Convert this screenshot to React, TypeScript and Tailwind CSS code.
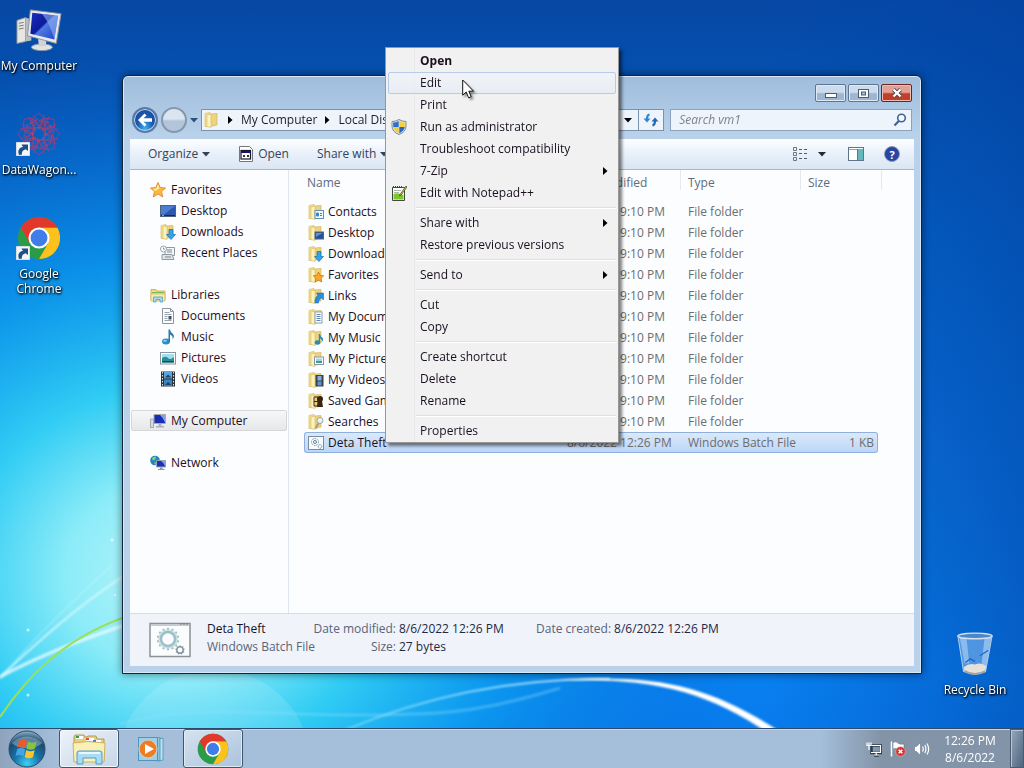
import { FC, ReactNode, useState } from 'react'

interface IconProps {
  className?: string
}

/* ---------- Icons ---------- */

const ComputerIcon: FC<IconProps> = ({ className }) => (
  <svg viewBox="0 0 48 44" className={className} aria-hidden="true">
    <defs>
      <linearGradient id="screen" x1="0" y1="0" x2="1" y2="1">
        <stop offset="0" stopColor="#1a2fc0" />
        <stop offset="0.45" stopColor="#0c1a9a" />
        <stop offset="0.5" stopColor="#4f7be0" />
        <stop offset="1" stopColor="#1c3ed0" />
      </linearGradient>
    </defs>
    <path d="M1 12 L10 9 V34 L1 36 Z" fill="#e6e6e2" stroke="#8d9096" strokeWidth="1" />
    <path d="M10 9 L16 11 V33 L10 34 Z" fill="#b9bcc0" />
    <path d="M3 15 L8 14 M3 18 L8 17 M3 21 L8 20" stroke="#777" strokeWidth="1" />
    <ellipse cx="27" cy="40" rx="11" ry="3.5" fill="#dfe3e6" stroke="#8f979e" strokeWidth="1" />
    <path d="M23 31 H32 L31 39 H24 Z" fill="#cfd3d6" />
    <path d="M15 1 L47 5 L42 36 L12 28 Z" fill="#e7eaec" stroke="#8b9299" strokeWidth="1" />
    <path d="M17 4 L44 7 L40 32 L15 26 Z" fill="url(#screen)" />
    <path d="M27 5 L44 7 L40 32 Q36 16 27 5 Z" fill="#8fb0f2" opacity="0.6" />
  </svg>
)

const ShortcutArrow: FC<IconProps> = ({ className }) => (
  <svg viewBox="0 0 14 14" className={className} aria-hidden="true">
    <rect width="14" height="14" fill="#f4f6f8" stroke="#b8c4d0" strokeWidth="1" />
    <path d="M3 13 C1 8 4 5 7 5 L5.5 2.5 H12 V9 L9.8 7.2 C7 8 5.5 9.500 6 12.500 Z" fill="#1e4f86" />
  </svg>
)

const WagonIcon: FC<IconProps> = ({ className }) => (
  <svg viewBox="0 0 48 48" className={className} aria-hidden="true" fill="none" stroke="#9a3f80" strokeWidth="0.900">
    {[0, 45, 90, 135, 180, 225, 270, 315].map((a) => (
      <g key={a} transform={`rotate(${a} 24 24)`}>
        <path d="M24 16 L17 7 L24 1 L31 7 Z M24 16 L30 3 M24 16 L18 3 M17 7 L14 13 M20 17 L28 17" />
        <path d="M24 9 L36 12 M20 20 L30 12" stroke="#cc4458" strokeDasharray="2 1" />
      </g>
    ))}
    <circle cx="24" cy="24" r="7" stroke="#cc4458" strokeDasharray="3 2" />
    <circle cx="24" cy="24" r="13" strokeDasharray="2 2" />
  </svg>
)

const ChromeIcon: FC<IconProps> = ({ className }) => (
  <svg viewBox="0 0 48 48" className={className} aria-hidden="true">
    <circle cx="24" cy="24" r="23" fill="#2c9b47" />
    <path d="M24 12.500 H43.900 A23 23 0 0 1 24 47 L34 29.800 Z" fill="#fcc21b" />
    <path d="M4.100 12.500 A23 23 0 0 1 43.900 12.500 H24 L14 29.800 Z" fill="#e2382c" />
    <circle cx="24" cy="24" r="11.500" fill="#fff" />
    <circle cx="24" cy="24" r="9.200" fill="#3f7de8" />
  </svg>
)

const RecycleBinIcon: FC<IconProps> = ({ className }) => (
  <svg viewBox="0 0 40 46" className={className} aria-hidden="true">
    <path d="M2 4 L8 42 Q20 48 31 42 L38 4 Z" fill="#7fb4ee" opacity="0.6" />
    <path d="M4 6 L9 33 H14 L11 6 Z" fill="#fff" opacity="0.35" />
    <path d="M30 7 L27 33 L32 36 L37 6 Z" fill="#dcecfb" opacity="0.45" />
    <path d="M8 37 Q14 32 20 34 Q27 31 32 36 L31 42 Q20 47 9 42 Z" fill="#e6e1d8" />
    <path d="M9 41 Q20 47 31 41" fill="none" stroke="#a4a4a0" strokeWidth="2" />
    <path d="M10 32 L15 28 L20 31 M25 25 L34 19" stroke="#1d5fc0" strokeWidth="1.200" fill="none" />
    <ellipse cx="20" cy="4" rx="18" ry="3" fill="#4a86c8" stroke="#d3e0ea" strokeWidth="1.500" />
    <path d="M2 4 L8 42 M38 4 L31 42" stroke="#b9d4ee" strokeWidth="1" />
  </svg>
)

const FolderIcon: FC<{ children?: ReactNode }> = ({ children }) => (
  <svg viewBox="0 0 16 16" className="size-4 shrink-0" aria-hidden="true">
    <path d="M1 1.500 L6 0.500 V14.500 L1 14.500 Z" fill="#f6e08e" stroke="#d5b554" strokeWidth="0.600" />
    <path d="M6 2 L13 1.500 V13 L6 14.500 Z" fill="#efd27c" stroke="#cfae4f" strokeWidth="0.600" />
    <path d="M3 3 L7 2 V15.500 L3 14.500 Z" fill="#fdf2bd" stroke="#d9bb5e" strokeWidth="0.600" />
    {children}
  </svg>
)

const Overlay = {
  contacts: (
    <g>
      <rect x="7" y="6.500" width="8.500" height="8" fill="#f4fafe" stroke="#5f8fb5" />
      <path d="M8.500 9 h2 v3 h-2z M12 9.500 h2 M12 11.500 h2" stroke="#3a87c6" fill="#3a87c6" />
    </g>
  ),
  desktop: (
    <g>
      <rect x="7" y="7" width="8.500" height="7" fill="#2450a0" stroke="#55657a" />
      <path d="M8 8 h6.500 l-6.500 4z" fill="#5d90dd" />
    </g>
  ),
  downloads: <path d="M9 5.500 h4 v5 h2.500 l-4.500 5 l-4.500 -5 h2.500z" fill="#35a3e8" stroke="#176fae" strokeWidth="0.700" />,
  favorites: (
    <path
      d="M10.500 5 l1.600 3.400 l3.600 0.400 l-2.600 2.500 l0.700 3.700 l-3.300 -1.800 l-3.300 1.800 l0.700 -3.700 l-2.600 -2.500 l3.600 -0.400z"
      fill="#f6a92e"
      stroke="#c9690f"
      strokeWidth="0.700"
    />
  ),
  links: <path d="M7 15 C6.500 11 8 8.500 10 7.500 L8.500 5 H15.500 V12 L13.500 10 C11.500 11 10.500 12.500 10.500 15 Z" fill="#2b8ddd" stroke="#1260a5" strokeWidth="0.500" />,
  documents: (
    <g>
      <rect x="7" y="3" width="7" height="11" fill="#fafcff" stroke="#8d9fb2" />
      <path d="M8.500 5.500 h4 M8.500 7.500 h4 M8.500 9.500 h4 M8.500 11.500 h4" stroke="#5f87b8" />
    </g>
  ),
  music: (
    <g fill="#2f89b8">
      <ellipse cx="9.500" cy="12.500" rx="2.800" ry="2.200" />
      <path d="M10.800 12.500 V4 H12 Q12.500 7 15 8 Q15.500 11 13.500 12 Q14.500 9.500 12 8.500 V12.500z" />
    </g>
  ),
  pictures: (
    <g>
      <rect x="6.500" y="6" width="9" height="7.500" fill="#fff" stroke="#8796a4" />
      <rect x="8" y="7.500" width="6" height="2.500" fill="#9ed0ee" />
      <rect x="8" y="10" width="6" height="2" fill="#4c9783" />
    </g>
  ),
  videos: (
    <g>
      <rect x="7.500" y="3" width="8" height="11.500" fill="#3a424c" />
      <rect x="9.500" y="4" width="4" height="4.500" fill="#7db3de" />
      <rect x="9.500" y="9.500" width="4" height="4" fill="#5b94c8" />
    </g>
  ),
  games: (
    <g fill="#3a2410">
      <circle cx="12" cy="6" r="3" />
      <path d="M10 8 h4 l1 6 h-6z" />
      <path d="M6 4 h4 v9 h-4z" fill="none" stroke="#3a2410" />
      <path d="M6 8.500 h4" stroke="#3a2410" />
    </g>
  ),
  searches: (
    <g fill="none">
      <path d="M11 8.500 L7.500 14.500" stroke="#a39b82" strokeWidth="2" />
      <circle cx="12" cy="6.500" r="3" fill="#e6f1f8" stroke="#9aa6ac" />
    </g>
  ),
}

const Gear: FC<{ cx: number; cy: number; r: number; teeth: number; color: string }> = ({ cx, cy, r, teeth, color }) => (
  <g stroke={color} fill="none">
    <circle cx={cx} cy={cy} r={r} strokeWidth={r * 0.45} />
    {Array.from({ length: teeth }, (_, i) => (
      <path
        key={i}
        d={`M${cx} ${cy - r} v${-r * 0.5}`}
        strokeWidth={r * 0.28}
        transform={`rotate(${(360 / teeth) * i} ${cx} ${cy})`}
      />
    ))}
  </g>
)

const BatchIcon: FC<IconProps> = ({ className }) => (
  <svg viewBox="0 0 16 16" className={className} aria-hidden="true">
    <rect x="0.500" y="1.500" width="15" height="13" fill="#f8fbfd" stroke="#7a8da0" />
    <g fill="none" stroke="#5f8296">
      <circle cx="7" cy="7" r="3.500" strokeDasharray="1 0.800" />
      <circle cx="7" cy="7" r="1.500" />
      <circle cx="12" cy="11.500" r="1.800" strokeDasharray="1 0.600" />
    </g>
  </svg>
)

const BatchLargeIcon: FC<IconProps> = ({ className }) => (
  <svg viewBox="0 0 42 36" className={className} aria-hidden="true">
    <rect x="1" y="1.500" width="40" height="33" fill="#fbfcfd" stroke="#8c9196" strokeWidth="1.500" />
    <path d="M2 3 H40" stroke="#c5cbd0" strokeWidth="2" />
    <path d="M31 2 h2 M34 2 h2 M37 2 h2" stroke="#6c757d" />
    <Gear cx={19} cy={17} r={7.5} teeth={14} color="#9fbdcc" />
    <circle cx="19" cy="17" r="9" fill="none" stroke="#c6e4d6" strokeWidth="1.500" />
    <Gear cx={31} cy={28} r={3.2} teeth={9} color="#82929e" />
  </svg>
)

const StarIcon = () => (
  <svg viewBox="0 0 16 16" className="size-4 shrink-0" aria-hidden="true">
    <path
      d="M8 0.500 L10.200 5.500 L15.600 6 L11.500 9.600 L12.800 15 L8 12.100 L3.200 15 L4.500 9.600 L0.400 6 L5.800 5.500 Z"
      fill="#fcb83c"
      stroke="#d9822a"
      strokeWidth="0.800"
    />
    <path d="M8 2.500 L9.500 6.300 L5 9 L3 7 L6.300 6.400 Z" fill="#fff0a8" />
  </svg>
)

const DesktopIcon = () => (
  <svg viewBox="0 0 16 16" className="size-4 shrink-0" aria-hidden="true">
    <rect x="0.500" y="2.500" width="15" height="11" fill="#2a57b0" stroke="#50617a" />
    <path d="M1 3 h14 L4 11.500 H1z" fill="#4a7fd0" />
    <path d="M1 12.500 h14" stroke="#1b2c50" />
    <path d="M2 12.500 h2" stroke="#64c96c" />
  </svg>
)

const RecentIcon = () => (
  <svg viewBox="0 0 16 16" className="size-4 shrink-0" aria-hidden="true">
    <path d="M5 2.500 h9.500 v8 h-9.500z" fill="#f4f6f8" stroke="#8f99a3" />
    <path d="M2 9.500 h10 l2 5 h-12z" fill="#e1e5e9" stroke="#8f99a3" />
    <path d="M7 5 h5 M7 7 h5 M5 12 h6" stroke="#7a8792" />
    <circle cx="3.500" cy="4" r="3" fill="#fff" stroke="#98a2ab" />
    <path d="M3.500 2.500 V4.200 H5" stroke="#667" fill="none" strokeWidth="0.700" />
  </svg>
)

const LibrariesIcon = () => (
  <svg viewBox="0 0 16 16" className="size-4 shrink-0" aria-hidden="true">
    <path d="M1 2.500 h5 l1 1.500 h8 v9 h-14z" fill="#f4da7d" stroke="#c9a545" strokeWidth="0.800" />
    <path d="M2 5.500 h12" stroke="#79b956" />
    <path d="M1 7 h14 v7 h-14z" fill="#fbecaa" stroke="#d2b35a" strokeWidth="0.700" />
    <path d="M3.500 15 v-5 h9 v5 h-2.500 v-2.500 h-4 v2.500z" fill="#a6dcf4" stroke="#4aa0cc" strokeWidth="0.800" />
  </svg>
)

const DocumentIcon = () => (
  <svg viewBox="0 0 16 16" className="size-4 shrink-0" aria-hidden="true">
    <path d="M2.500 0.500 h8 l3 3 v12 h-11z" fill="#fbfcfd" stroke="#8e959c" />
    <path d="M10.500 0.500 v3 h3" fill="none" stroke="#8e959c" />
    <path d="M4.500 4.500 h5 M4.500 6.500 h7 M4.500 8.500 h3 M4.500 10.500 h3 M4.500 12.500 h7" stroke="#97a3ae" />
    <rect x="8.500" y="8" width="3" height="3.500" fill="#42525f" />
  </svg>
)

const MusicIcon = () => (
  <svg viewBox="0 0 16 16" className="size-4 shrink-0" aria-hidden="true">
    <ellipse cx="6" cy="12.500" rx="4" ry="3" fill="#2a8cc8" />
    <path d="M8.500 12.500 V0.500 H10 Q10.300 3 13 5 Q15 7.500 12.500 10.500 Q13.500 7 10 5.500 V12.500 Z" fill="#2a7cae" />
    <ellipse cx="5" cy="11.700" rx="1.800" ry="1" fill="#8fd3f3" />
  </svg>
)

const PictureIcon = () => (
  <svg viewBox="0 0 16 16" className="size-4 shrink-0" aria-hidden="true">
    <rect x="0.500" y="2.500" width="15" height="11.500" fill="#fff" stroke="#8b959d" />
    <rect x="2" y="4" width="12" height="5" fill="#a3dcf5" />
    <path d="M2 8 Q6 5.500 8 8 T14 7 V12.500 H2z" fill="#2b8f8c" />
    <path d="M2 11 h12 v1.500 h-12z" fill="#174e6b" />
  </svg>
)

const VideoIcon = () => (
  <svg viewBox="0 0 16 16" className="size-4 shrink-0" aria-hidden="true">
    <rect x="1" y="0.500" width="14" height="15" fill="#2b3138" />
    <rect x="4" y="1" width="8" height="6.500" fill="#5da3dc" />
    <rect x="4" y="8.500" width="8" height="6.500" fill="#3d85c2" />
    <path d="M5 6.500 l3 -3 l3.500 3z M5 14 l3 -3 l3.500 3z" fill="#1b446b" />
    <path d="M2.500 1 v14 M13.500 1 v14" stroke="#e4e8eb" strokeDasharray="1.500 1.500" />
  </svg>
)

const SmallComputerIcon = () => (
  <svg viewBox="0 0 16 16" className="size-4 shrink-0" aria-hidden="true">
    <path d="M0.500 6 h3 v8.500 h-3z" fill="#d9dbdd" stroke="#888f96" strokeWidth="0.700" />
    <path d="M4 1.500 h11.500 v9 h-11.500z" fill="#1b2cb4" stroke="#a3abb4" />
    <path d="M10 2 h5 v7.500 q-2 -5 -5 -7.500z" fill="#7fa1ea" />
    <path d="M8.500 11 h3 v2 h2.500 v1.500 h-8 v-1.500 h2.500z" fill="#aab2ba" />
  </svg>
)

const NetworkIcon = () => (
  <svg viewBox="0 0 16 16" className="size-4 shrink-0" aria-hidden="true">
    <circle cx="5" cy="5.500" r="4.800" fill="#1e84c4" />
    <path d="M2 3 q2 -2 4 -1.500 q0 3 -2 4 q-2 0 -2 -2.500z M4 7.500 l3 0 l-1.500 2.500z" fill="#7bd66c" />
    <path d="M6.500 5.500 h9 v6.500 h-9z" fill="#1c2fb8" stroke="#9aa5b0" />
    <path d="M11 6 h4 v5 q-1 -3 -4 -5z" fill="#7fa1ea" />
    <path d="M10 12.500 h2.500 v1.500 h2 v1 h-6.500 v-1 h2z" fill="#8f98a1" />
  </svg>
)

const CalendarIcon = () => (
  <svg viewBox="0 0 16 16" className="size-4" aria-hidden="true">
    <path d="M1.500 0.500 h10 l3 3 v12 h-13z" fill="#fff" stroke="#777" />
    <rect x="3" y="4.500" width="9.500" height="8.500" fill="#fff" stroke="#14142e" strokeWidth="1.200" />
    <path d="M3 6 h9.500" stroke="#14146e" strokeWidth="2" />
    <path d="M5 9 h2 v2 h-2z M9 9 h2 v2 h-2z" fill="#333" />
  </svg>
)

const ShieldIcon = () => (
  <svg viewBox="0 0 16 16" className="size-4" aria-hidden="true">
    <path d="M8 0.500 Q11 2.500 15 2.500 V7 Q15 13 8 15.500 Q1 13 1 7 V2.500 Q5 2.500 8 0.500Z" fill="#dfe5ea" stroke="#7d8b98" />
    <path d="M7.700 2 V8 H2.200 V3.500 Q5.500 3.500 7.700 2Z" fill="#2f6fd0" />
    <path d="M8.300 2 Q10.500 3.500 13.800 3.500 V8 H8.300Z" fill="#f6d13c" />
    <path d="M2.300 8 H7.700 V14.200 Q2.800 12 2.300 8Z" fill="#f2cd38" />
    <path d="M8.300 8 H13.700 Q13.200 12 8.300 14.200Z" fill="#2b66c5" />
  </svg>
)

const NotepadIcon = () => (
  <svg viewBox="0 0 16 16" className="size-4" aria-hidden="true">
    <path d="M1.500 2.500 h12 v13 h-12z" fill="#fbfdf8" stroke="#3e4a3e" />
    <path d="M2.500 1 v2 M4.500 1 v2 M6.500 1 v2 M8.500 1 v2 M10.500 1 v2" stroke="#444" />
    <path d="M3 5.500 h7 M3 7.500 h5" stroke="#a9b7a9" />
    <path d="M2.500 9 Q7 7 12.500 10 V14.500 H2.500z" fill="#7cc52c" />
    <path d="M15 1 L9 9.500 L8.500 11 L10 10.200 L16 2z" fill="#d9d45a" stroke="#3b3f18" strokeWidth="0.700" />
  </svg>
)

const ExplorerIcon: FC<IconProps> = ({ className }) => (
  <svg viewBox="0 0 36 32" className={className} aria-hidden="true">
    <path d="M3 4 L4 2 H13 L14 4 H16 L17 3 H25 L26 6 H33 V28 H3Z" fill="#e9cf7c" stroke="#b89a4b" />
    <path d="M5 3 h7 v3 h-7z M15 5 h8 v3 h-8z M22 7 h8 v3 h-8z" fill="#fff" />
    <path d="M5 3 h3 v2 h-3z" fill="#3c9b46" />
    <path d="M15 5 h3 v2 h-3z" fill="#d8523e" />
    <path d="M22 7 h3 v2 h-3z" fill="#3d7ac8" />
    <path d="M2 10 L17 8.500 L34 10 L33 29 H3Z" fill="#fbf0b4" stroke="#cdb262" />
    <path d="M6 31 V20 Q6 18 8 18 H29 Q31 18 31 20 V31 H25 V25 H12 V31Z" fill="#a8dcf6" stroke="#4f9fca" />
    <path d="M8 20 H29" stroke="#e9f8ff" strokeWidth="2" />
  </svg>
)

const MediaPlayerIcon: FC<IconProps> = ({ className }) => (
  <svg viewBox="0 0 28 26" className={className} aria-hidden="true">
    <path d="M22 3 L26 2 V24 L22 25Z M19 2 L23 1.500 V24.500 L19 25Z" fill="#bfe2f2" stroke="#4a92b5" strokeWidth="0.800" />
    <rect x="1.500" y="1.500" width="19" height="23" fill="#9ecfe8" stroke="#5295b8" />
    <circle cx="11" cy="13" r="9" fill="#ee7d22" stroke="#c8cfd5" strokeWidth="1.200" />
    <path d="M8 8 L17 13 L8 18Z" fill="#fff" />
  </svg>
)

const StartOrb: FC<IconProps> = ({ className }) => (
  <svg viewBox="0 0 38 38" className={className} aria-hidden="true">
    <defs>
      <radialGradient id="orb" cx="0.5" cy="0.9" r="0.9">
        <stop offset="0" stopColor="#3fd0f5" />
        <stop offset="0.4" stopColor="#1773a8" />
        <stop offset="0.75" stopColor="#1b4a70" />
        <stop offset="1" stopColor="#8fb3cc" />
      </radialGradient>
    </defs>
    <circle cx="19" cy="19" r="18" fill="url(#orb)" stroke="#2c4d6b" strokeWidth="1" />
    <path d="M4 13 Q19 0 34 13 Q30 18 19 18 Q8 18 4 13Z" fill="#fff" opacity="0.3" />
    <path d="M11 11 Q15 8 19 11 L17.500 18 Q13.500 15.500 9.500 17.500Z" fill="#ee5a24" />
    <path d="M20 11.500 Q24.500 14 28.500 11.500 L27 18.500 Q23 21 18.500 18.500Z" fill="#85c441" />
    <path d="M9.200 19 Q13.500 17 17.200 19.500 L15.500 26.500 Q11.500 24 7.500 26Z" fill="#46a3e6" />
    <path d="M18.200 20 Q22.500 22.500 26.700 20 L25 27 Q21 29.500 16.700 27Z" fill="#fcc52b" />
  </svg>
)

const CaretDown: FC<IconProps> = ({ className }) => (
  <svg viewBox="0 0 8 5" className={`h-[5px] w-2 shrink-0 ${className ?? ''}`} aria-hidden="true">
    <path d="M0 0 H8 L4 4.500Z" fill="currentColor" />
  </svg>
)

const CaretRight: FC<IconProps> = ({ className }) => (
  <svg viewBox="0 0 5 8" className={`h-2 w-[5px] shrink-0 ${className ?? ''}`} aria-hidden="true">
    <path d="M0 0 V8 L4.500 4Z" fill="currentColor" />
  </svg>
)

/* ---------- Data ---------- */

interface FileEntry {
  name: string
  icon: ReactNode
  modified: string
  type: string
  size?: string
}

const folder = (name: string, overlay: ReactNode): FileEntry => ({
  name,
  icon: <FolderIcon>{overlay}</FolderIcon>,
  modified: '8/5/2022 9:10 PM',
  type: 'File folder',
})

const FILES: FileEntry[] = [
  folder('Contacts', Overlay.contacts),
  folder('Desktop', Overlay.desktop),
  folder('Downloads', Overlay.downloads),
  folder('Favorites', Overlay.favorites),
  folder('Links', Overlay.links),
  folder('My Documents', Overlay.documents),
  folder('My Music', Overlay.music),
  folder('My Pictures', Overlay.pictures),
  folder('My Videos', Overlay.videos),
  folder('Saved Games', Overlay.games),
  folder('Searches', Overlay.searches),
  {
    name: 'Deta Theft',
    icon: <BatchIcon className="size-4 shrink-0" />,
    modified: '8/6/2022 12:26 PM',
    type: 'Windows Batch File',
    size: '1 KB',
  },
]

interface NavGroup {
  label: string
  icon: ReactNode
  items?: { label: string; icon: ReactNode }[]
}

const NAV: NavGroup[] = [
  {
    label: 'Favorites',
    icon: <StarIcon />,
    items: [
      { label: 'Desktop', icon: <DesktopIcon /> },
      { label: 'Downloads', icon: <FolderIcon>{Overlay.downloads}</FolderIcon> },
      { label: 'Recent Places', icon: <RecentIcon /> },
    ],
  },
  {
    label: 'Libraries',
    icon: <LibrariesIcon />,
    items: [
      { label: 'Documents', icon: <DocumentIcon /> },
      { label: 'Music', icon: <MusicIcon /> },
      { label: 'Pictures', icon: <PictureIcon /> },
      { label: 'Videos', icon: <VideoIcon /> },
    ],
  },
  { label: 'My Computer', icon: <SmallComputerIcon /> },
  { label: 'Network', icon: <NetworkIcon /> },
]

interface MenuEntry {
  label: string
  icon?: ReactNode
  bold?: boolean
  submenu?: boolean
}

const MENU: MenuEntry[][] = [
  [
    { label: 'Open', bold: true },
    { label: 'Edit' },
    { label: 'Print' },
    { label: 'Run as administrator', icon: <ShieldIcon /> },
    { label: 'Troubleshoot compatibility' },
    { label: '7-Zip', submenu: true },
    { label: 'Edit with Notepad++', icon: <NotepadIcon /> },
  ],
  [{ label: 'Share with', submenu: true }, { label: 'Restore previous versions' }],
  [{ label: 'Send to', submenu: true }],
  [{ label: 'Cut' }, { label: 'Copy' }],
  [{ label: 'Create shortcut' }, { label: 'Delete' }, { label: 'Rename' }],
  [{ label: 'Properties' }],
]

/* ---------- Desktop ---------- */

const Wallpaper = () => (
  <svg
    viewBox="0 0 1024 768"
    preserveAspectRatio="none"
    className="absolute inset-0 size-full"
    aria-hidden="true"
  >
    <defs>
      <linearGradient id="sky" x1="0" y1="0" x2="0" y2="1">
        <stop offset="0" stopColor="#0648a4" />
        <stop offset="0.3" stopColor="#0560c4" />
        <stop offset="0.6" stopColor="#0a72dc" />
        <stop offset="0.88" stopColor="#0880f0" />
        <stop offset="1" stopColor="#0878ea" />
      </linearGradient>
      <radialGradient id="glow" gradientUnits="userSpaceOnUse" cx="170" cy="575" r="580" gradientTransform="translate(170 575) scale(1 0.9) translate(-170 -575)">
        <stop offset="0" stopColor="#b8f4fa" />
        <stop offset="0.18" stopColor="#8cecf8" />
        <stop offset="0.36" stopColor="#30ccf4" />
        <stop offset="0.6" stopColor="#0c9cf0" stopOpacity="0.8" />
        <stop offset="1" stopColor="#0668d4" stopOpacity="0" />
      </radialGradient>
      <linearGradient id="shade" x1="0" y1="0" x2="1" y2="0">
        <stop offset="0.75" stopColor="#0047b0" stopOpacity="0" />
        <stop offset="1" stopColor="#0040a0" stopOpacity="0.5" />
      </linearGradient>
      <linearGradient id="arc" gradientUnits="userSpaceOnUse" x1="340" y1="0" x2="780" y2="0">
        <stop offset="0" stopColor="#aef0ff" stopOpacity="0.4" />
        <stop offset="0.6" stopColor="#d8f6ff" stopOpacity="0.9" />
        <stop offset="1" stopColor="#fff" />
      </linearGradient>
      <filter id="soft">
        <feGaussianBlur stdDeviation="1" />
      </filter>
    </defs>
    <rect width="1024" height="768" fill="url(#sky)" />
    <rect width="1024" height="768" fill="url(#glow)" />
    <rect width="1024" height="768" fill="url(#shade)" />
    <circle cx="214" cy="766" r="97" fill="#fff" opacity="0.12" />
    <g fill="none" filter="url(#soft)">
      <path d="M0 677 C40 640 70 612 125 575" stroke="#e0fbff" strokeWidth="2" opacity="0.8" />
      <path d="M0 680 C30 640 75 600 112 565" stroke="#e0fbff" strokeWidth="1" opacity="0.6" />
      <path d="M0 677 C40 655 80 640 125 625" stroke="#f0fdff" strokeWidth="3" opacity="0.8" />
      <path d="M120 724 C200 700 300 720 410 714 C470 714 520 700 560 688" stroke="#8fe0ff" strokeWidth="3" opacity="0.35" />
      <path d="M345 730 C440 690 530 678 610 679" stroke="url(#arc)" strokeWidth="2" />
    </g>
    <path d="M0 717 C25 680 60 640 125 617" fill="none" stroke="#9be05c" strokeWidth="2" />
    <path d="M560 680 C660 674 710 686 782 733 L768 733 C710 694 660 678 560 680Z" fill="#fff" filter="url(#soft)" />
    <g fill="#fff" opacity="0.7">
      <circle cx="112" cy="540" r="1.500" />
      <circle cx="28" cy="630" r="1.500" />
      <circle cx="115" cy="595" r="1" />
      <circle cx="28" cy="695" r="1.500" />
    </g>
  </svg>
)

interface DesktopItemProps {
  label: string
  shortcut?: boolean
  children: ReactNode
}

const DesktopItem: FC<DesktopItemProps> = ({ label, shortcut, children }) => (
  <button className="flex w-[78px] flex-col items-center gap-1.5">
    <span className="relative flex h-11 w-[46px] items-center justify-center">
      {children}
      {shortcut && <ShortcutArrow className="absolute bottom-0 left-0 size-3.5" />}
    </span>
    <span className="text-center leading-[15px] text-white [text-shadow:1px_1px_2px_#000,0_1px_3px_#000]">{label}</span>
  </button>
)

/* ---------- Explorer window ---------- */

const WindowControls = () => (
  <div className="flex justify-end gap-0.5">
    <button
      aria-label="Minimize"
      className="flex h-[18px] w-[31px] items-center justify-center rounded-[2px] border border-[#5e7590] bg-linear-to-b from-[#cddcec] from-45% to-[#9db7d3] to-55% shadow-[inset_0_0_0_1px_#dfeaf5]"
    >
      <svg viewBox="0 0 12 5" className="mt-1 h-[5px] w-3" aria-hidden="true">
        <rect x="0.500" y="0.500" width="11" height="4" fill="#fff" stroke="#4c5c70" />
      </svg>
    </button>
    <button
      aria-label="Maximize"
      className="flex h-[18px] w-[31px] items-center justify-center rounded-[2px] border border-[#5e7590] bg-linear-to-b from-[#cddcec] from-45% to-[#9db7d3] to-55% shadow-[inset_0_0_0_1px_#dfeaf5]"
    >
      <svg viewBox="0 0 11 9" className="h-[9px] w-[11px]" aria-hidden="true">
        <rect x="0.500" y="0.500" width="10" height="8" fill="#fff" stroke="#4c5c70" />
        <rect x="3.500" y="3" width="4" height="3" fill="#a9bfd6" stroke="#4c5c70" />
      </svg>
    </button>
    <button
      aria-label="Close"
      className="flex h-[18px] w-[31px] items-center justify-center rounded-[2px] border border-[#6b2424] bg-linear-to-b from-[#e0a296] from-45% to-[#c2402a] to-55% shadow-[inset_0_0_0_1px_#edbcb2]"
    >
      <svg viewBox="0 0 12 10" className="h-2.5 w-3" aria-hidden="true">
        <path d="M2.500 1.500 L9.500 8.500 M9.500 1.500 L2.500 8.500" stroke="#50404a" strokeWidth="4" />
        <path d="M2.500 1.500 L9.500 8.500 M9.500 1.500 L2.500 8.500" stroke="#fff" strokeWidth="2.400" />
      </svg>
    </button>
  </div>
)

const AddressRow = () => {
  const [query, setQuery] = useState('')

  return (
    <div className="flex items-center">
      <button
        aria-label="Back"
        className="flex size-[26px] items-center justify-center rounded-full border-2 border-[#5a7ba3] bg-radial-[at_50%_90%] from-[#38b4ee] via-[#1c58b4] to-[#1c3c80] shadow-[inset_0_0_0_1px_#b7d2ee]"
      >
        <svg viewBox="0 0 16 14" className="h-3.5 w-4" aria-hidden="true">
          <path d="M7.500 0.500 L1 7 L7.500 13.500 L9.500 11.500 L6.500 8.700 H15 V5.300 H6.500 L9.500 2.500Z" fill="#fff" />
        </svg>
      </button>
      <button
        aria-label="Forward"
        className="ml-[3px] size-[26px] rounded-full border-2 border-[#8497ae] bg-linear-to-b from-[#dbe5f0] from-45% to-[#b3c5da] to-55%"
      />
      <button aria-label="Recent pages" className="flex w-3.5 justify-center text-[#2e4f78]">
        <CaretDown />
      </button>
      <div className="flex h-[22px] min-w-0 flex-1 items-center border border-[#7b92ad] bg-[#eef4fb] text-[#1e1e2a]">
        <span className="flex w-[18px] justify-center pl-0.5">
          <FolderIcon />
        </span>
        <CaretRight className="mx-2 text-black" />
        <button className="whitespace-nowrap">My Computer</button>
        <CaretRight className="mx-2 text-black" />
        <button className="whitespace-nowrap">Local Disk</button>
        <span className="flex-1" />
        <button aria-label="Previous locations" className="flex h-full w-5 items-center justify-center text-black">
          <CaretDown />
        </button>
        <button aria-label="Refresh" className="flex h-full w-[25px] items-center justify-center border-l border-[#7b92ad]">
          <svg viewBox="0 0 16 14" className="h-3.5 w-4" aria-hidden="true">
            <path d="M6.500 1.500 Q4 2 4 6" fill="none" stroke="#2f86cf" strokeWidth="2.200" />
            <path d="M0.500 5.500 H7.500 L4 9.500Z" fill="#2f86cf" />
            <path d="M9.500 12.500 Q12 12 12 8" fill="none" stroke="#1f6bb4" strokeWidth="2.200" />
            <path d="M8.500 8.500 H15.500 L12 4.500Z" fill="#1f6bb4" />
          </svg>
        </button>
      </div>
      <label className="ml-1.5 flex h-[22px] w-[31%] shrink-0 items-center border border-[#8da3bd] bg-[#eef4fb] pr-1 pl-2">
        <input
          aria-label="Search vm1"
          placeholder="Search vm1"
          value={query}
          onChange={(e) => setQuery(e.target.value)}
          className="w-full min-w-0 bg-transparent italic outline-none placeholder:text-[#7d838c]"
        />
        <svg viewBox="0 0 14 14" className="size-3.5 shrink-0" aria-hidden="true">
          <circle cx="8.500" cy="5" r="3.800" fill="#f4f9fe" stroke="#3e6496" strokeWidth="1.600" />
          <path d="M5.800 8 L1.500 12.500" stroke="#3e6496" strokeWidth="2.200" />
        </svg>
      </label>
    </div>
  )
}

const Toolbar = () => (
  <div className="flex h-[31px] shrink-0 items-center border-b border-[#a9b9cc] bg-linear-to-b from-[#fafcff] from-10% via-[#e8f0fa] via-50% to-[#dbe6f4] pr-3.5 pl-[18px] text-[#34435a]">
    <button className="flex items-center gap-1">
      Organize
      <CaretDown />
    </button>
    <button className="ml-7 flex items-center gap-1">
      <CalendarIcon />
      Open
    </button>
    <button className="ml-7 flex items-center gap-1">
      Share with
      <CaretDown />
    </button>
    <span className="flex-1" />
    <button aria-label="Change view" className="flex items-center">
      <svg viewBox="0 0 16 14" className="h-3.5 w-4" aria-hidden="true" fill="none" stroke="#6b7888">
        <path d="M1.500 0.500 h3 v3 h-3z M1.500 5.500 h3 v3 h-3z M1.500 10.500 h3 v3 h-3z" />
        <path d="M7 2.500 h3 M12 2.500 h3 M7 6.500 h3 M12 6.500 h3 M7 11.500 h3 M12 11.500 h3" stroke="#4e5b6c" />
      </svg>
      <CaretDown className="ml-2.5 text-[#1e2b3c]" />
    </button>
    <button aria-label="Preview pane" className="ml-[22px]">
      <svg viewBox="0 0 16 14" className="h-3.5 w-4" aria-hidden="true">
        <rect x="0.500" y="0.500" width="15" height="13" fill="#fff" stroke="#5e7488" />
        <path d="M1 2.500 H15" stroke="#8fa6ba" />
        <rect x="10" y="3" width="5" height="10" fill="#63b8bd" />
        <path d="M9.500 2 V13" stroke="#5e7488" />
      </svg>
    </button>
    <button
      aria-label="Help"
      className="ml-5 flex size-4 items-center justify-center rounded-full border border-[#8b9cc0] bg-[#2845a0] text-[11px] leading-none font-bold text-white"
    >
      ?
    </button>
  </div>
)

const NavPane = () => (
  <nav className="w-[159px] shrink-0 border-r border-[#dfe6ee] pt-[9px]">
    {NAV.map((group) => (
      <section key={group.label} className="mb-[21px]">
        <a
          href="#"
          className={`mx-px flex h-[21px] items-center gap-[5px] border pl-[18px] ${
            group.label === 'My Computer'
              ? 'rounded-[2px] border-[#d5d7da] bg-linear-to-b from-[#f8f8f9] to-[#e6e7e9]'
              : 'border-transparent'
          }`}
        >
          {group.icon}
          {group.label}
        </a>
        {group.items?.map((item) => (
          <a key={item.label} href="#" className="flex h-[21px] items-center gap-[5px] pl-[30px]">
            {item.icon}
            {item.label}
          </a>
        ))}
      </section>
    ))}
  </nav>
)

const FileTable = () => {
  const [selected, setSelected] = useState('Deta Theft')

  return (
    <div className="min-w-0 flex-1 pl-[15px]">
      <table className="w-[578px] table-fixed border-separate border-spacing-0 text-left whitespace-nowrap">
        <colgroup>
          <col className="w-[257px]" />
          <col className="w-[120px]" />
          <col className="w-[120px]" />
          <col className="w-[77px]" />
          <col className="w-1" />
        </colgroup>
        <thead className="text-[#5d6b7c]">
          <tr>
            {['Name', 'Date modified', 'Type'].map((heading) => (
              <th key={heading} className="h-[31px] p-0 align-top font-normal">
                <div className="h-5 border-r border-[#e4e9ef] pt-1 pl-[3px] leading-[18px] [th+th>&]:pl-[7px]">{heading}</div>
              </th>
            ))}
            <th colSpan={2} className="p-0 align-top font-normal">
              <div className="h-5 border-r border-[#e4e9ef] pt-1 pl-[7px] leading-[18px]">Size</div>
            </th>
          </tr>
        </thead>
        <tbody>
          {FILES.map((file) => {
            const active = file.name === selected
            const cell = active ? 'border-y border-[#8fb0dc] bg-linear-to-b from-[#dbe9fb] to-[#bcd6f8]' : 'border-y border-transparent'
            return (
              <tr key={file.name} onClick={() => setSelected(file.name)} className="text-[#6d6d6d]">
                <td className={`h-[21px] rounded-l-[3px] p-0 ${active ? 'border-l' : 'border-l border-transparent'} ${cell}`}>
                  <span className="flex items-center gap-1 pl-[3px] leading-[19px] text-[#1c1024]">
                    {file.icon}
                    {file.name}
                  </span>
                </td>
                <td className={`h-[21px] p-0 pl-1.5 leading-[19px] ${cell}`}>{file.modified}</td>
                <td className={`h-[21px] p-0 pl-[7px] leading-[19px] ${cell}`}>{file.type}</td>
                <td className={`h-[21px] rounded-r-[3px] p-0 pr-[3px] text-right leading-[19px] ${active ? 'border-r' : ''} ${cell}`}>
                  {file.size}
                </td>
                <td className="p-0" />
              </tr>
            )
          })}
        </tbody>
      </table>
    </div>
  )
}

const DetailsPane = () => (
  <footer className="flex h-[53px] shrink-0 items-start border-t border-[#d3dce8] bg-[#f0f3fa] pt-1.5 pl-[19px] leading-[18px] text-[#5a6577]">
    <BatchLargeIcon className="mt-0.5 h-9 w-[42px]" />
    <div className="ml-4 w-[109px]">
      <p className="text-[#141428]">Deta Theft</p>
      <p className="whitespace-nowrap">Windows Batch File</p>
    </div>
    <dl className="grid w-[220px] grid-cols-[80px_1fr] gap-x-[3px] whitespace-nowrap">
      <dt className="flex justify-end">Date modified:</dt>
      <dd className="text-[#1e2a44]">8/6/2022 12:26 PM</dd>
      <dt className="flex justify-end">Size:</dt>
      <dd className="text-[#1e2a44]">27 bytes</dd>
    </dl>
    <dl className="flex gap-[3px] whitespace-nowrap">
      <dt>Date created:</dt>
      <dd className="text-[#1e2a44]">8/6/2022 12:26 PM</dd>
    </dl>
  </footer>
)

const ExplorerWindow = () => (
  <main className="absolute top-[75px] right-[102px] bottom-[54px] left-[122px] flex flex-col rounded-t-md border border-[#10243c] bg-linear-to-b from-[#9fbddc] to-[#b9d1ea] to-10% px-[7px] pb-[7px] shadow-[inset_0_0_0_1px_#d9e8f6,0_0_8px_rgba(0,0,0,0.5)]">
    <header className="flex flex-col gap-[5px] px-0.5 pt-2 pb-1.5">
      <WindowControls />
      <AddressRow />
    </header>
    <Toolbar />
    <div className="flex min-h-0 flex-1 bg-[#fcfdfe] text-[#1c1024]">
      <NavPane />
      <FileTable />
    </div>
    <DetailsPane />
  </main>
)

/* ---------- Context menu ---------- */

const ContextMenu = () => {
  const [hovered, setHovered] = useState('Edit')

  return (
    <div
      role="menu"
      className="absolute top-[47px] left-[385px] w-[234px] border border-[#979797] bg-[#f0f0f0] bg-linear-to-r from-[#f1f1f1] from-[28px] via-[#e0e1e2] via-[28px] to-[#f1f1f1] to-[29px] px-0.5 pt-0.5 text-[#1a1020] shadow-[3px_3px_3px_rgba(0,0,0,0.5)]"
    >
      {MENU.map((group, i) => (
        <div key={i} role="group">
          {i > 0 && <hr className="my-[3px] ml-7 h-0.5 border-t border-b border-t-[#e0e0e0] border-b-white" />}
          {group.map((item) => (
            <button
              key={item.label}
              role="menuitem"
              onMouseEnter={() => setHovered(item.label)}
              className={`flex h-[22px] w-full items-center rounded-[2px] border pr-[7px] text-left ${item.bold ? 'font-bold' : ''} ${
                hovered === item.label
                  ? 'border-[#b8cbe6] bg-linear-to-b from-[#f1f4f9]/70 to-[#e4ebf6]/70'
                  : 'border-transparent'
              }`}
            >
              <span className="w-[31px] pl-0.5">{item.icon}</span>
              <span className="flex-1">{item.label}</span>
              {item.submenu && <CaretRight className="text-black" />}
            </button>
          ))}
        </div>
      ))}
    </div>
  )
}

const Cursor = () => (
  <svg viewBox="0 0 13 20" className="pointer-events-none absolute top-[79px] left-[462px] h-5 w-[13px] drop-shadow-[2px_2px_1px_rgba(0,0,0,0.4)]" aria-hidden="true">
    <path d="M0.700 1 V16.200 L4.200 13 L6.600 18.800 L9.200 17.700 L6.800 12.200 H11.600Z" fill="#fff" stroke="#111" strokeWidth="1" />
  </svg>
)

/* ---------- Taskbar ---------- */

const Taskbar = () => (
  <footer className="relative flex h-10 items-stretch border-t border-[#2b4a6c] bg-linear-to-r from-[#a5bfdb] from-80% to-[#8394a8] to-86% text-white shadow-[inset_0_1px_0_#c6d8ea]">
    <button aria-label="Start" className="w-[59px] bg-linear-to-r from-[#8fa3bd] to-[#a5bfdb] pl-2">
      <StartOrb className="size-[38px]" />
    </button>
    <button
      aria-label="Windows Explorer"
      className="flex w-[60px] items-center justify-center rounded-[3px] border border-[#3f5670] bg-linear-to-br from-[#eef3f9] to-[#c6d6e8] shadow-[inset_0_0_0_1px_#f3f8fd]"
    >
      <ExplorerIcon className="h-8 w-9" />
    </button>
    <button aria-label="Windows Media Player" className="flex w-16 items-center justify-center">
      <MediaPlayerIcon className="h-[26px] w-7" />
    </button>
    <button
      aria-label="Google Chrome"
      className="flex w-[60px] items-center justify-center rounded-[3px] border border-[#3f5670] bg-linear-to-br from-[#d6e2ef] to-[#abc3dd] shadow-[inset_0_0_0_1px_#dfeaf5]"
    >
      <ChromeIcon className="size-8" />
    </button>
    <span className="flex-1" />
    <div className="flex items-center gap-2">
      <button aria-label="Network">
        <svg viewBox="0 0 16 16" className="size-4" aria-hidden="true" fill="none">
          <path d="M5.500 4.500 H15 V12 H5.500Z M8 14.500 H13 M10.200 12 V14.500" stroke="#2c3b4d" strokeWidth="2.500" />
          <path d="M5.500 4.500 H14.500 V11.500 H5 M8 14 H13 M10.200 12 V14" stroke="#fff" strokeWidth="1.200" />
          <path d="M1 1.500 V4.500 H5 V1.500 M3 4.500 V9 M3 1.500 V4" stroke="#fff" strokeWidth="1.200" />
        </svg>
      </button>
      <button aria-label="Action Center">
        <svg viewBox="0 0 16 16" className="size-4" aria-hidden="true">
          <path d="M1.500 0.500 V15.500" stroke="#fff" strokeWidth="1.500" />
          <path d="M3 1.500 Q6 0 8 2 Q10 4 14 3 V9 Q10 10 8 8 Q6 7 3 8Z" fill="#fff" stroke="#56657a" strokeWidth="0.500" />
          <circle cx="10.500" cy="10.500" r="4.800" fill="#d8322c" stroke="#f2b5b0" strokeWidth="0.600" />
          <path d="M8.700 8.700 L12.300 12.300 M12.300 8.700 L8.700 12.300" stroke="#fff" strokeWidth="1.600" />
        </svg>
      </button>
      <button aria-label="Volume">
        <svg viewBox="0 0 16 16" className="size-4" aria-hidden="true">
          <path d="M0.500 5.500 H2.500 L6.500 1.500 V14.500 L2.500 10.500 H0.500Z" fill="#fff" stroke="#56657a" strokeWidth="0.500" />
          <path d="M8.500 5.500 Q10 8 8.500 10.500 M10.800 4 Q13 8 10.800 12 M13 2.500 Q16.300 8 13 13.500" fill="none" stroke="#fff" strokeWidth="1.200" />
        </svg>
      </button>
    </div>
    <button className="w-20 text-center leading-[17px]">
      12:26 PM
      <br />
      8/6/2022
    </button>
    <button aria-label="Show desktop" className="w-3.5 border border-[#4b5c72] bg-linear-to-br from-[#94a7bc] to-[#51657e] shadow-[inset_1px_1px_0_#b7c6d6]" />
  </footer>
)

export default function App() {
  return (
    <div className="relative flex h-screen flex-col overflow-hidden font-['Open_Sans','Noto_Sans',sans-serif] text-[12px] leading-[18px]">
      <Wallpaper />
      <div className="relative min-h-0 flex-1">
        <div className="grid w-[78px] auto-rows-[104px] items-start pt-2">
          <DesktopItem label="My Computer">
            <ComputerIcon className="h-11 w-[46px]" />
          </DesktopItem>
          <DesktopItem label="DataWagon..." shortcut>
            <WagonIcon className="size-11" />
          </DesktopItem>
          <DesktopItem label="Google Chrome" shortcut>
            <ChromeIcon className="size-11" />
          </DesktopItem>
        </div>
        <div className="absolute right-2.5 bottom-[31px]">
          <DesktopItem label="Recycle Bin">
            <RecycleBinIcon className="h-11 w-[38px]" />
          </DesktopItem>
        </div>
        <ExplorerWindow />
        <ContextMenu />
        <Cursor />
      </div>
      <Taskbar />
    </div>
  )
}
